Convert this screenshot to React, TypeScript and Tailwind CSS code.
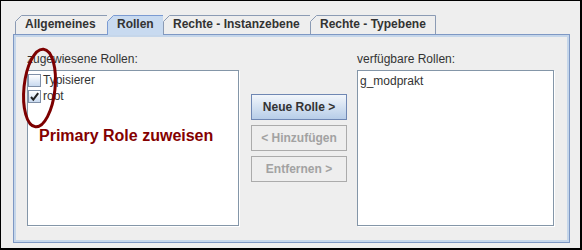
import React from "react";

function Tab({ label, width, selected, last }: { label: string; width: number; selected?: boolean; last?: boolean }) {
  const h = selected ? 20 : 19;
  const stroke = selected ? "#7b9bd2" : "#8b9bb4";
  return (
    <div className={selected ? "relative h-[20px] z-10" : "relative h-[19px]"} style={{ width }}>
      <svg className="absolute inset-0" width={width} height={h}>
        <path
          d={`M0 ${h} V6.5 L6.5 0 H${width} V${h} Z`}
          fill={selected ? "#c8daf0" : "#eeeeee"}
        />
        <path
          d={last ? `M0.5 ${h} V6.5 L6.5 0.5 H${width - 0.5} V${h}` : `M0.5 ${h} V6.5 L6.5 0.5 H${width}`}
          fill="none"
          stroke={stroke}
          strokeWidth="1"
        />
      </svg>
      <div className="relative pl-[10px] h-[19px] leading-[19px] text-[12px] font-bold text-[#333333] whitespace-nowrap">
        {label}
      </div>
    </div>
  );
}

function Check({ checked }: { checked?: boolean }) {
  return (
    <div className="relative w-[13px] h-[13px] border border-[#7f90a8] bg-gradient-to-b from-[#ffffff] to-[#c9daef] shrink-0">
      {checked && (
        <svg className="absolute left-[0px] top-[0px]" width="11" height="11" viewBox="0 0 11 11">
          <path d="M2 6 L4.3 8.6 L9.2 2.2" fill="none" stroke="#222222" strokeWidth="2" />
        </svg>
      )}
    </div>
  );
}

export default function App() {
  return (
    <div
      className="relative w-[582px] h-[250px] bg-[#eeeeee] border-l border-t border-r-2 border-b-2 border-black pt-[14px] pl-[12px]"
      style={{ fontFamily: '"Liberation Sans", Arial, sans-serif' }}
    >
      <div className="flex items-start pl-[2px] h-[20px] mb-[-1px]">
        <Tab label="Allgemeines" width={92} />
        <Tab label="Rollen" width={56} selected />
        <Tab label="Rechte - Instanzebene" width={147} />
        <Tab label="Rechte - Typebene" width={126} last />
      </div>
      <div className="w-[557px] h-[209px] border border-[#7e98c4]">
        <div className="h-full border-2 border-[#c5d6ea] flex pl-[11px] pt-[15px] text-[12px] text-[#333333]">
          <div className="w-[212px] flex flex-col">
            <div className="leading-[14px] h-[14px]">zugewiesene Rollen:</div>
            <div className="mt-[4px] h-[156px] bg-white border border-[#8496a8] shadow-[1px_1px_0_#ffffff]">
              <div className="flex items-center h-[17px] pt-[1px]">
                <Check />
                <span className="ml-[2px] leading-[17px]">Typisierer</span>
              </div>
              <div className="flex items-center h-[17px]">
                <Check checked />
                <span className="ml-[2px] leading-[17px]">root</span>
              </div>
              <div className="mt-[22px] ml-[11px] text-[16px] leading-[18px] font-bold text-[#840000] whitespace-nowrap">
                Primary Role zuweisen
              </div>
            </div>
          </div>
          <div className="ml-[12px] mt-[42px] w-[96px] flex flex-col gap-[5px]">
            <div className="h-[26px] border border-[#6f87b3] bg-gradient-to-b from-[#f2f6fb] to-[#b7cde8] flex items-center justify-center font-bold text-[#333333]">
              Neue Rolle &gt;
            </div>
            <div className="h-[26px] border border-[#ababab] flex items-center justify-center font-bold text-[#a2a2a2]">
              &lt; Hinzufügen
            </div>
            <div className="h-[26px] border border-[#ababab] flex items-center justify-center font-bold text-[#a2a2a2]">
              Entfernen &gt;
            </div>
          </div>
          <div className="ml-[10px] w-[197px] flex flex-col">
            <div className="leading-[14px] h-[14px]">verfügbare Rollen:</div>
            <div className="mt-[4px] h-[156px] bg-white border border-[#8496a8] shadow-[1px_1px_0_#ffffff] pl-[2px] pt-[2px] leading-[17px]">
              g_modprakt
            </div>
          </div>
        </div>
      </div>
      <svg className="absolute left-[17px] top-[43px]" width="44" height="90">
        <ellipse cx="21.5" cy="44" rx="15.5" ry="39" fill="none" stroke="#7d0000" strokeWidth="3" transform="rotate(6 21.5 44)" />
      </svg>
    </div>
  );
}
